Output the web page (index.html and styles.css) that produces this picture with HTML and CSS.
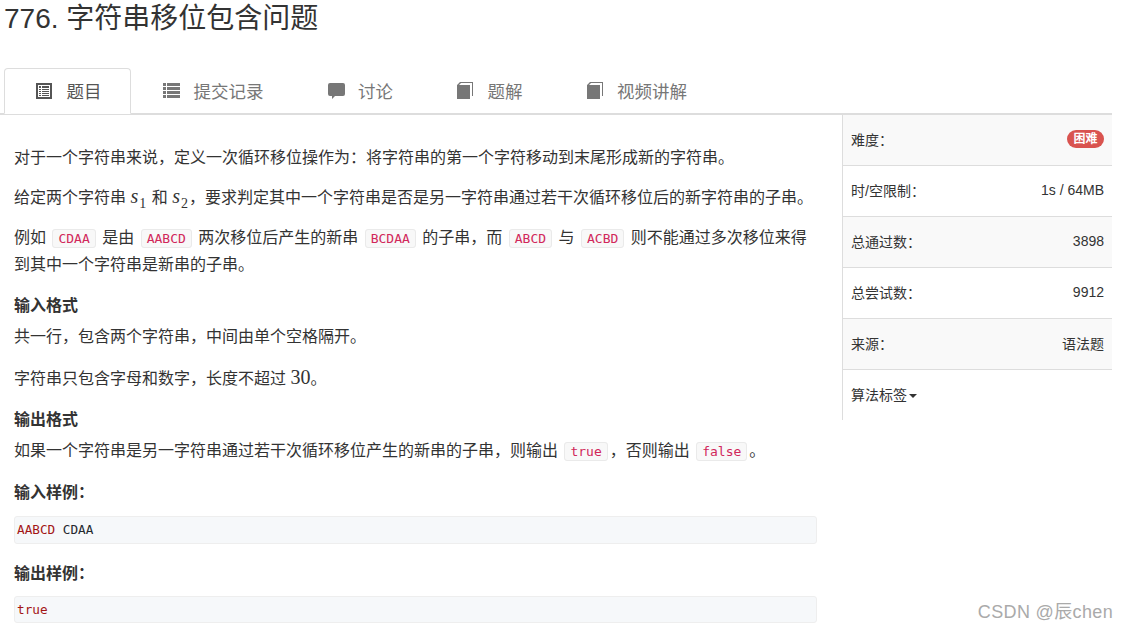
FILE: index.html
```html
<!DOCTYPE html>
<html lang="zh-CN">
<head>
  <meta charset="UTF-8" />
  <title>776. 字符串移位包含问题</title>
  <link rel="stylesheet" href="styles.css">
</head>
<body>
  <h1 class="title">776. 字符串移位包含问题</h1>

  <ul class="tabs">
    <li class="tab active">
      <svg class="icon" viewBox="0 0 17 17"><path fill-rule="evenodd" d="M0 1h16v16H0zM2 3v12h12V3zM3 4h2v2H3zM6 4h7v2H6zM3 7h2v1H3zM6 7h7v1H6zM3 9h2v1H3zM6 9h7v1H6zM3 11h2v1H3zM6 11h7v1H6zM3 13h2v1H3zM6 13h7v1H6z"/></svg>
      题目
    </li>
    <li class="tab">
      <svg class="icon" viewBox="0 0 17 17"><path d="M0 1h3v3H0zM4 1h13v3H4zM0 5h3v3H0zM4 5h13v3H4zM0 9h3v3H0zM4 9h13v3H4zM0 13h3v3H0zM4 13h13v3H4z"/></svg>
      提交记录
    </li>
    <li class="tab">
      <svg class="icon" viewBox="0 0 17 17"><path d="M2 1h13q2 0 2 2v9q0 2-2 2H7l-3 3v-3H2q-2 0-2-2V3q0-2 2-2z"/></svg>
      讨论
    </li>
    <li class="tab">
      <svg class="icon" viewBox="0 0 17 17"><path d="M0 3l3-3h13v14h-1V1H4L2 3h11v14H0z"/></svg>
      题解
    </li>
    <li class="tab">
      <svg class="icon" viewBox="0 0 17 17"><path d="M0 3l3-3h13v14h-1V1H4L2 3h11v14H0z"/></svg>
      视频讲解
    </li>
  </ul>

  <div class="layout">
    <main class="content">
      <p>对于一个字符串来说，定义一次循环移位操作为：将字符串的第一个字符移动到末尾形成新的字符串。</p>
      <p>给定两个字符串 <span class="math"><i>s</i><sub>1</sub></span> 和 <span class="math"><i>s</i><sub>2</sub></span>，要求判定其中一个字符串是否是另一字符串通过若干次循环移位后的新字符串的子串。</p>
      <p>例如 <code>CDAA</code> 是由 <code>AABCD</code> 两次移位后产生的新串 <code>BCDAA</code> 的子串，而 <code>ABCD</code> 与 <code>ACBD</code> 则不能通过多次移位来得到其中一个字符串是新串的子串。</p>

      <h4>输入格式</h4>
      <p>共一行，包含两个字符串，中间由单个空格隔开。</p>
      <p class="spaced">字符串只包含字母和数字，长度不超过 <span class="math">30</span>。</p>

      <h4>输出格式</h4>
      <p>如果一个字符串是另一字符串通过若干次循环移位产生的新串的子串，则输出 <code>true</code>，否则输出 <code>false</code>。</p>

      <h4>输入样例：</h4>
      <pre><span class="kw">AABCD</span> CDAA</pre>

      <h4>输出样例：</h4>
      <pre><span class="kw">true</span></pre>
    </main>

    <aside class="side">
      <div class="row shaded"><span>难度：</span><span class="badge">困难</span></div>
      <div class="row"><span>时/空限制：</span><span>1s / 64MB</span></div>
      <div class="row shaded"><span>总通过数：</span><span>3898</span></div>
      <div class="row"><span>总尝试数：</span><span>9912</span></div>
      <div class="row shaded"><span>来源：</span><span>语法题</span></div>
      <div class="row last"><span>算法标签<i class="caret"></i></span></div>
    </aside>
  </div>

  <div class="watermark">CSDN @辰chen</div>
</body>
</html>
```

FILE: styles.css
```css
* {
  box-sizing: border-box;
}

html, body {
  height: 626px;
  overflow: hidden;
}

body {
  margin: 0;
  position: relative;
  background: #fff;
  color: #333;
  font-family: "Liberation Sans", "Noto Sans CJK SC", sans-serif;
  font-size: 16px;
}

.title {
  margin: 0;
  padding: 1px 0 0 4px;
  height: 68px;
  font-size: 28px;
  font-weight: 400;
  line-height: 36px;
}

.tabs {
  list-style: none;
  display: flex;
  width: 1112px;
  height: 47px;
  margin: 0;
  padding: 0 0 0 4px;
  border-bottom: 2px solid #ddd;
}

.tab {
  display: flex;
  align-items: center;
  height: 46px;
  padding: 0 32px 2px;
  font-size: 17.5px;
  color: #777;
  white-space: nowrap;
}

.tab.active {
  width: 127px;
  padding-left: 31px;
  color: #555;
  background: #fff;
  border: 1px solid #ddd;
  border-bottom-color: #fff;
  border-radius: 4px 4px 0 0;
}

.icon {
  flex: none;
  width: 17px;
  height: 17px;
  margin-right: 13.5px;
  fill: currentColor;
}

.layout {
  display: flex;
  align-items: flex-start;
}

.content {
  width: 842px;
  padding: 30px 25px 0 14px;
}

.content p {
  margin: 0 0 14px;
  line-height: 26px;
}

.content p.spaced {
  margin-top: 16px;
}

.content h4 {
  margin: 15px 0 5px;
  font-size: 16px;
  font-weight: 700;
  line-height: 26px;
}

.content h4 + pre {
  margin-top: 10px;
}

.content h4 + pre:last-child {
  margin-top: 9px;
  height: 27px;
}

.math {
  font-family: "Liberation Serif", serif;
  font-size: 20px;
  line-height: 0;
}

.math sub {
  margin-left: 1px;
  margin-right: 1px;
  font-size: 14px;
  line-height: 0;
}

code {
  margin: 0 2px;
  padding: 1px 5px;
  font-family: "DejaVu Sans Mono", monospace;
  font-size: 13px;
  color: #d1275a;
  background: #f8f8f8;
  border: 1px solid #eaeaea;
  border-radius: 3px;
}

pre {
  margin: 0 0 17px;
  padding: 5px 2px;
  height: 28px;
  font-family: "DejaVu Sans Mono", monospace;
  font-size: 12.7px;
  line-height: 16px;
  color: #24292e;
  background: #f6f8fa;
  border: 1px solid #eee;
  border-radius: 3px;
}

.kw {
  color: #a31515;
}

.side {
  width: 270px;
  border-left: 1px solid #ddd;
  font-size: 14px;
}

.row {
  display: flex;
  align-items: center;
  justify-content: space-between;
  height: 51px;
  padding: 0 8px 2px;
  border-bottom: 1px solid #ddd;
}

.row.shaded {
  background: #f9f9f9;
}

.row.last {
  border-bottom: 0;
  height: 50px;
}

.badge {
  padding: 0 6.5px;
  font-size: 12px;
  font-weight: 700;
  line-height: 18px;
  color: #fff;
  background: #d9534f;
  border-radius: 9px;
}

.caret {
  display: inline-block;
  margin-left: 2px;
  vertical-align: middle;
  border-top: 4px solid #333;
  border-left: 4px solid transparent;
  border-right: 4px solid transparent;
}

.watermark {
  position: absolute;
  right: 10px;
  top: 599px;
  font-size: 18px;
  line-height: 26px;
  letter-spacing: 0.35px;
  color: #aaa;
}
```
